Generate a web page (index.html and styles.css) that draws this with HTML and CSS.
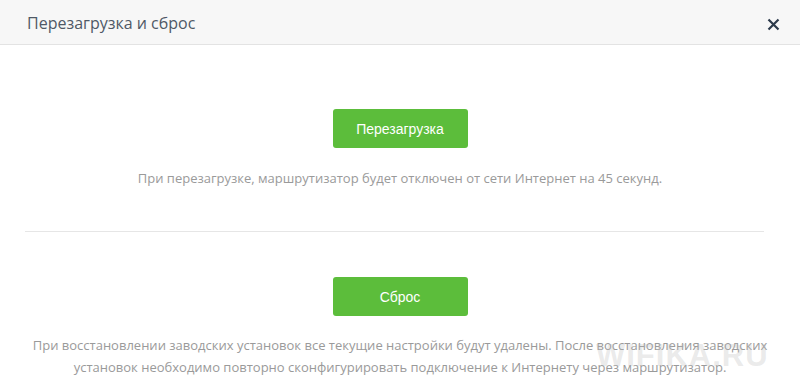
FILE: index.html
```html
<!DOCTYPE html>
<html lang="ru">
<head>
    <meta charset="UTF-8">
    <meta name="viewport" content="width=device-width, initial-scale=1.0">
    <title>Перезагрузка и сброс</title>
    <link rel="stylesheet" href="styles.css">
</head>
<body>
    <div class="dialog">
        <div class="dialog-header">
            <span class="dialog-title">Перезагрузка и сброс</span>
            <button class="close-btn" type="button" aria-label="Закрыть">
                <svg width="13" height="13" viewBox="0 0 13 13">
                    <path d="M1.5 1.5 L11.5 11.5 M11.5 1.5 L1.5 11.5" stroke="#2c3a4b" stroke-width="2.2" fill="none"/>
                </svg>
            </button>
        </div>

        <div class="section section-reboot">
            <button class="green-btn" type="button">Перезагрузка</button>
            <p class="note">При перезагрузке, маршрутизатор будет отключен от сети Интернет на 45 секунд.</p>
        </div>

        <hr class="divider">

        <div class="section">
            <button class="green-btn" type="button">Сброс</button>
            <p class="note note-reset">При восстановлении заводских установок все текущие настройки будут удалены. После восстановления заводских установок необходимо повторно сконфигурировать подключение к Интернету через маршрутизатор.</p>
        </div>

        <div class="watermark">WIFIKA.RU</div>
    </div>
</body>
</html>
```

FILE: styles.css
```css
body {
    margin: 0;
    font-family: "Open Sans", sans-serif;
    background: #fff;
}
.dialog {
    position: relative;
    width: 800px;
    height: 390px;
    overflow: hidden;
}
.dialog-header {
    height: 44px;
    background: #f7f7f7;
    border-bottom: 1px solid #e3e3e3;
    display: flex;
    align-items: center;
    justify-content: space-between;
    padding: 0 20px 0 27px;
}
.dialog-title {
    font-size: 16px;
    color: #4f5966;
    padding-top: 1px;
}
.close-btn {
    border: none;
    background: none;
    padding: 0;
    display: flex;
    margin-top: 5px;
    cursor: pointer;
}
.section {
    display: flex;
    flex-direction: column;
    align-items: center;
}
.section-reboot {
    padding-top: 64px;
}
.green-btn {
    width: 135px;
    height: 39px;
    border: none;
    border-radius: 3px;
    background: #5cbd3b;
    color: #fff;
    font-family: "Liberation Sans", Arial, sans-serif;
    font-size: 14px;
    cursor: pointer;
}
.note {
    margin: 19px 0 0;
    padding: 0 26px;
    text-align: center;
    font-size: 13px;
    line-height: 22px;
    color: #9a9a9a;
}
.note-reset {
    margin-top: 18px;
}
.divider {
    border: none;
    border-top: 1px solid #e6e6e6;
    margin: 42px 36px 45px 25px;
}
.watermark {
    position: absolute;
    left: 596px;
    top: 338px;
    font-family: "Liberation Sans", Arial, sans-serif;
    font-size: 31px;
    font-weight: bold;
    letter-spacing: 1px;
    color: rgba(185, 185, 185, 0.3);
}
```
